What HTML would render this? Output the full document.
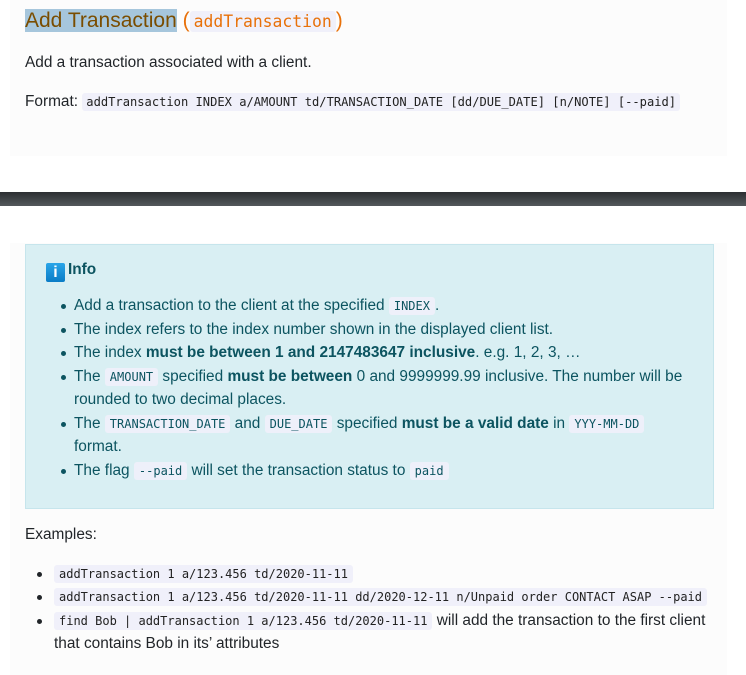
<!DOCTYPE html>
<html><head><meta charset="utf-8"><style>
*{margin:0;padding:0;box-sizing:border-box}
body{width:746px;height:675px;background:#fff;font-family:"Liberation Sans",sans-serif;color:#212529;position:relative;overflow:hidden;font-size:15.4px}
.panel{position:absolute;left:10px;width:717px;background:#fcfcfc}
code{font-family:"DejaVu Sans Mono",monospace;background:#f0f0fa;border-radius:3px;padding:1px 4px;color:#222}
.abs{position:absolute;white-space:nowrap}
.bar{position:absolute;left:0;top:192px;width:746px;height:14px;background:linear-gradient(#2c2f32,#53585c)}
.info{position:absolute;left:25px;top:244px;width:689px;height:265px;background:#d9eff3;border:1px solid #c6e5ec;color:#0c5460}
.li{position:absolute;left:48px;white-space:nowrap;line-height:23.5px}
.li::before{content:"";position:absolute;left:-13px;top:10px;width:5px;height:5px;border-radius:50%;background:#0c5460}
.il code{font-size:12px;background:#eef0fa;color:#0c5460;padding:2px 5px}
.ex{position:absolute;left:54px;white-space:nowrap;line-height:23.5px}
.ex::before{content:"";position:absolute;left:-17px;top:10px;width:5px;height:5px;border-radius:50%;background:#212529}
.ex code{font-size:12px;padding:2px 5px}
</style></head><body>
<div class="panel" style="top:0;height:156px"></div>
<div class="abs" style="left:25px;top:8px;font-size:21px;line-height:26px"><span style="background:#a6c6dc;color:#7a4d00">Add Transaction</span> <span style="color:#e8710a">(<code style="color:#e8710a;font-size:16.4px;padding:1px 4px;background:#f0f0fa">addTransaction</code>)</span></div>
<div class="abs" style="left:25px;top:54px">Add a transaction associated with a client.</div>
<div class="abs" style="left:25px;top:93px">Format: <code style="font-size:12.1px;padding:2px 4px">addTransaction INDEX a/AMOUNT td/TRANSACTION_DATE [dd/DUE_DATE] [n/NOTE] [--paid]</code></div>
<div class="bar"></div>
<div class="panel" style="top:243px;height:432px"></div>
<div class="info">
<div class="abs" style="left:20px;top:15px;font-weight:bold;font-size:15.4px;line-height:20px"><span style="display:inline-block;width:19px;height:19px;background:linear-gradient(#2aa5e8,#0a7cc6);border-radius:2px;color:#fff;text-align:center;font-size:16px;line-height:19px;vertical-align:-3px;margin-right:3px">i</span>Info</div>
</div>
<div class="il" style="position:absolute;left:26px;top:0;color:#0c5460">
<div class="li" style="top:294px">Add a transaction to the client at the specified <code>INDEX</code>.</div>
<div class="li" style="top:317.5px">The index refers to the index number shown in the displayed client list.</div>
<div class="li" style="top:341px">The index <b>must be between 1 and 2147483647 inclusive</b>. e.g. 1, 2, 3, …</div>
<div class="li" style="top:364.5px">The <code>AMOUNT</code> specified <b>must be between</b> 0 and 9999999.99 inclusive. The number will be</div>
<div class="abs" style="left:48px;top:388px;line-height:23.5px">rounded to two decimal places.</div>
<div class="li" style="top:411.5px">The <code>TRANSACTION_DATE</code> and <code>DUE_DATE</code> specified <b>must be a valid date</b> in <code>YYY-MM-DD</code></div>
<div class="abs" style="left:48px;top:435px;line-height:23.5px">format.</div>
<div class="li" style="top:458.5px">The flag <code>--paid</code> will set the transaction status to <code>paid</code></div>
</div>
<div class="abs" style="left:25px;top:526px">Examples:</div>
<div class="ex" style="top:561.5px"><code>addTransaction 1 a/123.456 td/2020-11-11</code></div>
<div class="ex" style="top:585px"><code>addTransaction 1 a/123.456 td/2020-11-11 dd/2020-12-11 n/Unpaid order CONTACT ASAP --paid</code></div>
<div class="ex" style="top:608.5px"><code>find Bob | addTransaction 1 a/123.456 td/2020-11-11</code> will add the transaction to the first client</div>
<div class="abs" style="left:54px;top:632px;line-height:23.5px">that contains Bob in its’ attributes</div>
</body></html>
